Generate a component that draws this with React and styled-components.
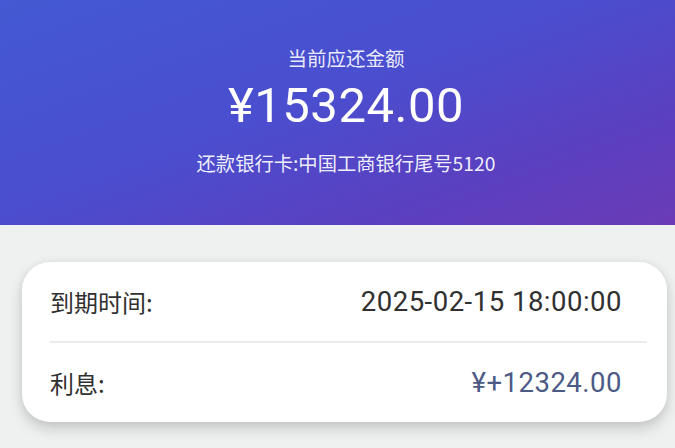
import React from 'react'
import styled, { createGlobalStyle } from 'styled-components'

const GlobalStyle = createGlobalStyle`
  html, body {
    margin: 0;
    padding: 0;
    background: #eff0f0;
  }
  body {
    font-family: "Noto Sans CJK SC", "Noto Sans", sans-serif;
  }
`

const rows = [
    { label: '到期时间:', value: '2025-02-15 18:00:00' },
    { label: '利息:', value: '¥+12324.00', accent: true },
]

function App() {
    return (
        <Page>
            <GlobalStyle />
            <Hero>
                <Caption>当前应还金额</Caption>
                <Amount>¥15324.00</Amount>
                <Bank>还款银行卡:中国工商银行尾号5120</Bank>
            </Hero>
            <Body>
                <Card>
                    {rows.map((row, i) => (
                        <React.Fragment key={i}>
                            {i > 0 && <Divider />}
                            <Row>
                                <Label>{row.label}</Label>
                                <Value $accent={row.accent}>{row.value}</Value>
                            </Row>
                        </React.Fragment>
                    ))}
                </Card>
            </Body>
        </Page>
    )
}

export default App

const Page = styled.div`
    width: 675px;
    height: 448px;
    overflow: hidden;
    background: #eff0f0;
`

const Hero = styled.div`
    height: 225px;
    box-sizing: border-box;
    padding: 43px 0 0 17px;
    display: flex;
    flex-direction: column;
    align-items: center;
    color: #fff;
    background: linear-gradient(160deg, #4459d3 0%, #4a4ecf 45%, #5a40c0 75%, #6b3bb7 100%);
`

const Caption = styled.div`
    font-size: 19.5px;
    line-height: 30px;
    color: rgba(255, 255, 255, 0.9);
`

const Amount = styled.div`
    font-family: "Roboto", "Noto Sans", sans-serif;
    font-size: 49px;
    line-height: 56px;
    margin-top: 5px;
    letter-spacing: 0.5px;
`

const Bank = styled.div`
    font-size: 19.3px;
    line-height: 28px;
    margin-top: 15px;
    color: rgba(255, 255, 255, 0.92);
`

const Body = styled.div`
    padding: 37px 8px 0 22px;
`

const Card = styled.div`
    background: #fff;
    border-radius: 28px;
    padding: 0 20px 0 28px;
    box-shadow: 0 7px 14px rgba(0, 0, 0, 0.16), 0 0 8px rgba(0, 0, 0, 0.06);
`

const Row = styled.div`
    display: flex;
    justify-content: space-between;
    align-items: center;
    height: 79px;
    padding-right: 25px;
`

const Label = styled.div`
    font-size: 24px;
    color: #303030;
`

const Value = styled.div`
    font-family: "Roboto", "Noto Sans", sans-serif;
    font-size: 27.5px;
    letter-spacing: 0.5px;
    color: ${p => (p.$accent ? '#4c5a86' : '#303030')};
`

const Divider = styled.div`
    height: 2px;
    background: #ececec;
`
